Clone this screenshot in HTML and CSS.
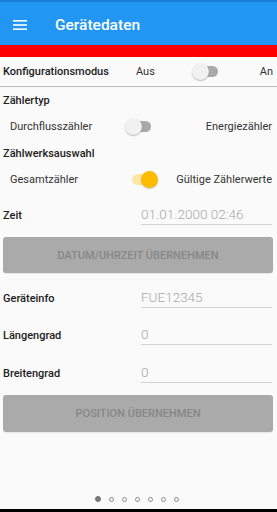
FILE: index.html
```html
<!DOCTYPE html>
<html>
<head>
<meta charset="utf-8">
<link rel="stylesheet" href="styles.css">
</head>
<body>
<div class="status"></div>
<header class="appbar">
  <svg class="menu" width="14" height="10" viewBox="0 0 14 10"><rect x="0" y="0" width="14" height="1.6" fill="#fff"/><rect x="0" y="4.2" width="14" height="1.6" fill="#fff"/><rect x="0" y="8.4" width="14" height="1.6" fill="#fff"/></svg>
  <span class="title">Gerätedaten</span>
</header>
<div class="redbar"></div>
<div class="config">
  <span class="c-label">Konfigurationsmodus</span>
  <span class="c-aus">Aus</span>
  <span class="switch off"><span class="track"></span><span class="thumb"></span></span>
  <span class="c-an">An</span>
</div>
<div class="sec-title">Zählertyp</div>
<div class="opt-row">
  <span class="opt-left w1">Durchflusszähler</span>
  <span class="switch off"><span class="track"></span><span class="thumb"></span></span>
  <span class="opt-right">Energiezähler</span>
</div>
<div class="sec-title">Zählwerksauswahl</div>
<div class="opt-row">
  <span class="opt-left w2">Gesamtzähler</span>
  <span class="switch on"><span class="track"></span><span class="thumb"></span></span>
  <span class="opt-right">Gültige Zählerwerte</span>
</div>
<div class="field first">
  <span class="f-label">Zeit</span>
  <span class="f-input">01.01.2000 02:46</span>
</div>
<div class="btn first-btn">DATUM/UHRZEIT ÜBERNEHMEN</div>
<div class="field after-btn">
  <span class="f-label">Geräteinfo</span>
  <span class="f-input">FUE12345</span>
</div>
<div class="field">
  <span class="f-label">Längengrad</span>
  <span class="f-input">0</span>
</div>
<div class="field tall">
  <span class="f-label">Breitengrad</span>
  <span class="f-input">0</span>
</div>
<div class="btn">POSITION ÜBERNEHMEN</div>
<div class="spacer"></div>
<div class="dots">
  <span class="dot active"></span><span class="dot"></span><span class="dot"></span><span class="dot"></span><span class="dot"></span><span class="dot"></span><span class="dot"></span>
</div>
<div class="navbar"></div>
</body>
</html>
```
FILE: styles.css
```css
* { box-sizing: border-box; }
html, body { margin: 0; padding: 0; }
body {
  width: 277px;
  height: 512px;
  background: #fafafa;
  font-family: Roboto, "Noto Sans", sans-serif;
  color: #212121;
  display: flex;
  flex-direction: column;
  overflow: hidden;
}
.status { height: 2px; background: #1a7fd4; }
.appbar {
  height: 43px;
  background: #2196f3;
  display: flex;
  align-items: center;
  padding-left: 13px;
  padding-top: 2px;
}
.menu { margin-right: 28px; margin-top: 0; }
.title { color: #fff; font-size: 15.5px; font-weight: 500; }
.redbar { height: 12px; background: #ff0000; }
.config {
  height: 30px;
  border-bottom: 1px solid #bdbdbd;
  display: flex;
  align-items: center;
  font-size: 11px;
  padding-left: 3px;
  padding-right: 4px;
}
.c-label { width: 133px; font-weight: 500; }
.c-aus { width: 56px; color: #333; }
.c-an { flex: 1; text-align: right; color: #333; }
.sec-title {
  height: 26px;
  display: flex;
  align-items: center;
  padding-left: 3px;
  font-size: 11px;
  font-weight: 500;
}
.opt-row {
  height: 27px;
  display: flex;
  align-items: center;
  padding-left: 10px;
  padding-right: 5px;
  font-size: 11px;
  color: #333;
}
.opt-left.w1 { width: 115px; }
.opt-left.w2 { width: 122px; }
.opt-right { flex: 1; text-align: right; }
.switch {
  position: relative;
  width: 26px;
  height: 17px;
  flex: none;
}
.switch .track {
  position: absolute;
  left: 3px;
  right: 0;
  top: 3px;
  height: 11px;
  border-radius: 6px;
}
.switch .thumb {
  position: absolute;
  top: 0;
  width: 17px;
  height: 17px;
  border-radius: 50%;
}
.switch.off .track { background: #a9a9a9; }
.switch.off .thumb { left: 0; background: #f1f1f1; box-shadow: 0 1px 1.5px rgba(0,0,0,0.25); }
.switch.on .track { background: #fde7a6; left: 0; right: 3px; }
.switch.on .thumb { right: 0; background: #ffbb00; box-shadow: 0 1px 1.5px rgba(0,0,0,0.2); }
.field {
  height: 37px;
  display: flex;
  align-items: flex-end;
  padding: 0 5px 0 3px;
}
.field.first { height: 32px; }
.field.after-btn { height: 35px; }
.field.tall { height: 38px; }
.f-label {
  width: 138px;
  font-size: 11px;
  font-weight: 500;
  padding-bottom: 3px;
}
.f-input {
  flex: 1;
  font-size: 13.5px;
  font-weight: 300;
  color: #a8a8a8;
  border-bottom: 1.5px solid #d2d2d2;
  padding-bottom: 1px;
  line-height: 18px;
}
.btn {
  margin: 12px 4px 0 3px;
  height: 37px;
  background: #aaaaaa;
  border-radius: 3px;
  display: flex;
  align-items: center;
  justify-content: center;
  font-size: 11px;
  font-weight: 500;
  color: #878787;
  box-shadow: 0 1px 1px rgba(0,0,0,0.08);
}
.btn.first-btn { height: 36px; }
.spacer { flex: 1; }
.dots {
  height: 14px;
  display: flex;
  justify-content: center;
  align-items: center;
  gap: 8px;
  padding-right: 4px;
  margin-bottom: 3px;
}
.dot {
  width: 5px;
  height: 5px;
  border-radius: 50%;
  border: 1px solid #8a8a8a;
}
.dot.active { background: #777; border-color: #777; width: 6px; height: 6px; }
.navbar { height: 3px; background: #000; }
```
